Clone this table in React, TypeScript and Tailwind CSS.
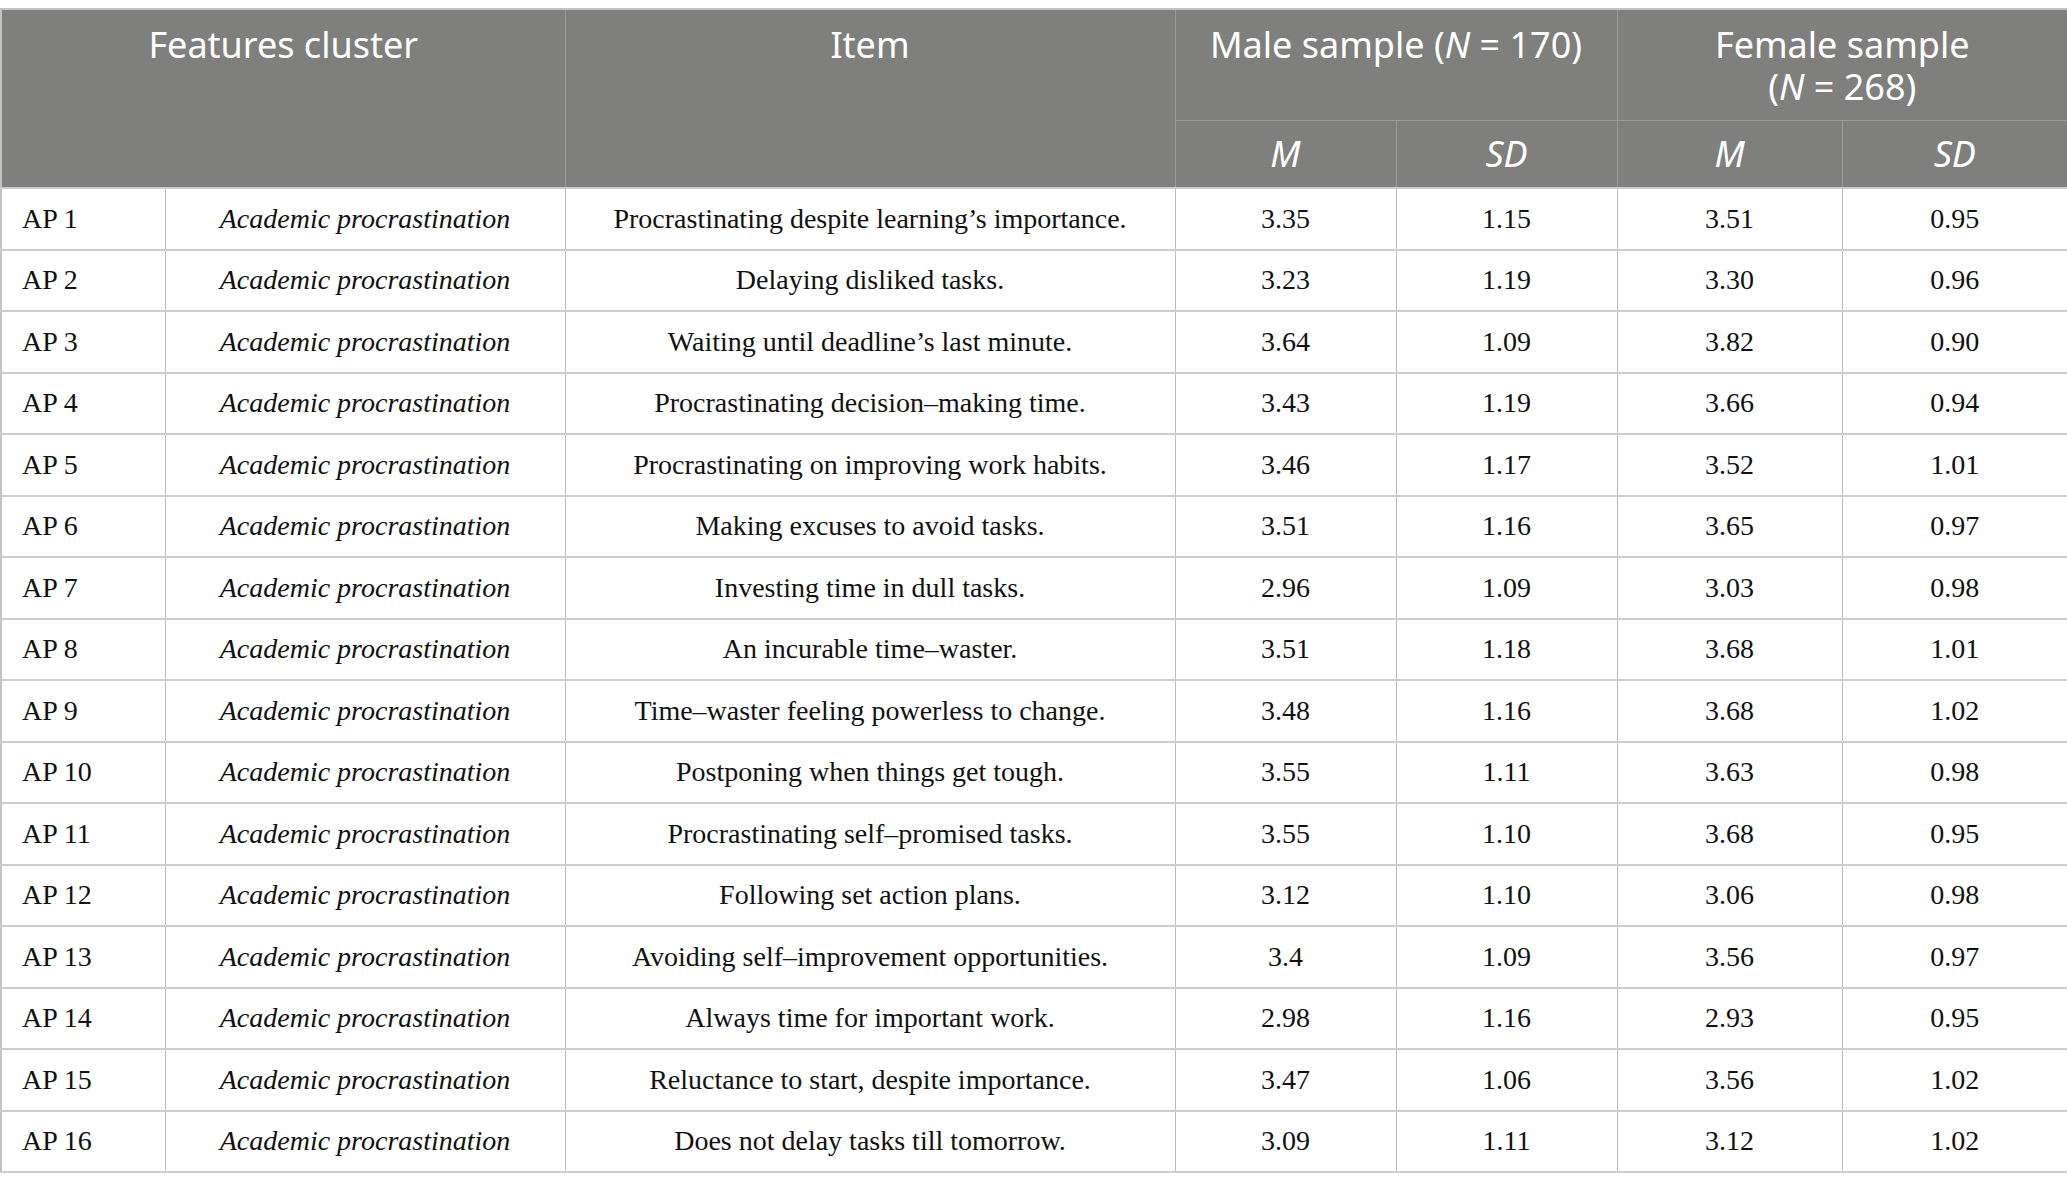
import React from "react";

const rows = [
	["AP 1", "Procrastinating despite learning’s importance.", "3.35", "1.15", "3.51", "0.95"],
	["AP 2", "Delaying disliked tasks.", "3.23", "1.19", "3.30", "0.96"],
	["AP 3", "Waiting until deadline’s last minute.", "3.64", "1.09", "3.82", "0.90"],
	["AP 4", "Procrastinating decision–making time.", "3.43", "1.19", "3.66", "0.94"],
	["AP 5", "Procrastinating on improving work habits.", "3.46", "1.17", "3.52", "1.01"],
	["AP 6", "Making excuses to avoid tasks.", "3.51", "1.16", "3.65", "0.97"],
	["AP 7", "Investing time in dull tasks.", "2.96", "1.09", "3.03", "0.98"],
	["AP 8", "An incurable time–waster.", "3.51", "1.18", "3.68", "1.01"],
	["AP 9", "Time–waster feeling powerless to change.", "3.48", "1.16", "3.68", "1.02"],
	["AP 10", "Postponing when things get tough.", "3.55", "1.11", "3.63", "0.98"],
	["AP 11", "Procrastinating self–promised tasks.", "3.55", "1.10", "3.68", "0.95"],
	["AP 12", "Following set action plans.", "3.12", "1.10", "3.06", "0.98"],
	["AP 13", "Avoiding self–improvement opportunities.", "3.4", "1.09", "3.56", "0.97"],
	["AP 14", "Always time for important work.", "2.98", "1.16", "2.93", "0.95"],
	["AP 15", "Reluctance to start, despite importance.", "3.47", "1.06", "3.56", "1.02"],
	["AP 16", "Does not delay tasks till tomorrow.", "3.09", "1.11", "3.12", "1.02"],
];

const th = "border border-[#9a9b99] font-normal text-white";
const td = "border-x border-x-[#bcbcbc] border-y-2 border-y-[#cdcdcd] text-center";

const App = () => {
	return (
		<div className="w-[2067px] bg-white pt-[8px]">
			<table
				className="w-full table-fixed border-collapse border-2 border-[#c2c2c2] text-[#111]"
				style={{ fontFamily: '"Liberation Serif", "Times New Roman", serif' }}
			>
				<colgroup>
					<col className="w-[164px]" />
					<col className="w-[400px]" />
					<col className="w-[610px]" />
					<col className="w-[221px]" />
					<col className="w-[221px]" />
					<col className="w-[225px]" />
					<col className="w-[226px]" />
				</colgroup>
				<thead
					className="bg-[#7f807e] text-[36px] leading-[42px]"
					style={{ fontFamily: '"Noto Sans", "Open Sans", sans-serif' }}
				>
					<tr className="h-[111px]">
						<th colSpan={2} rowSpan={2} className={`${th} align-top pt-[14px]`}>
							Features cluster
						</th>
						<th rowSpan={2} className={`${th} align-top pt-[14px]`}>
							Item
						</th>
						<th colSpan={2} className={`${th} align-top pt-[14px]`}>
							Male sample (<i>N</i> = 170)
						</th>
						<th colSpan={2} className={`${th} align-top pt-[14px]`}>
							Female sample
							<br />
							(<i>N</i> = 268)
						</th>
					</tr>
					<tr className="h-[68px]">
						<th className={th}>
							<i>M</i>
						</th>
						<th className={th}>
							<i>SD</i>
						</th>
						<th className={th}>
							<i>M</i>
						</th>
						<th className={th}>
							<i>SD</i>
						</th>
					</tr>
				</thead>
				<tbody className="text-[28px]">
					{rows.map((r) => (
						<tr key={r[0]} className="h-[61.5px]">
							<td className={`${td} !text-left pl-[20px]`}>{r[0]}</td>
							<td className={`${td} italic`}>Academic procrastination</td>
							<td className={td}>{r[1]}</td>
							<td className={td}>{r[2]}</td>
							<td className={td}>{r[3]}</td>
							<td className={td}>{r[4]}</td>
							<td className={td}>{r[5]}</td>
						</tr>
					))}
				</tbody>
			</table>
		</div>
	);
};

export default App;
